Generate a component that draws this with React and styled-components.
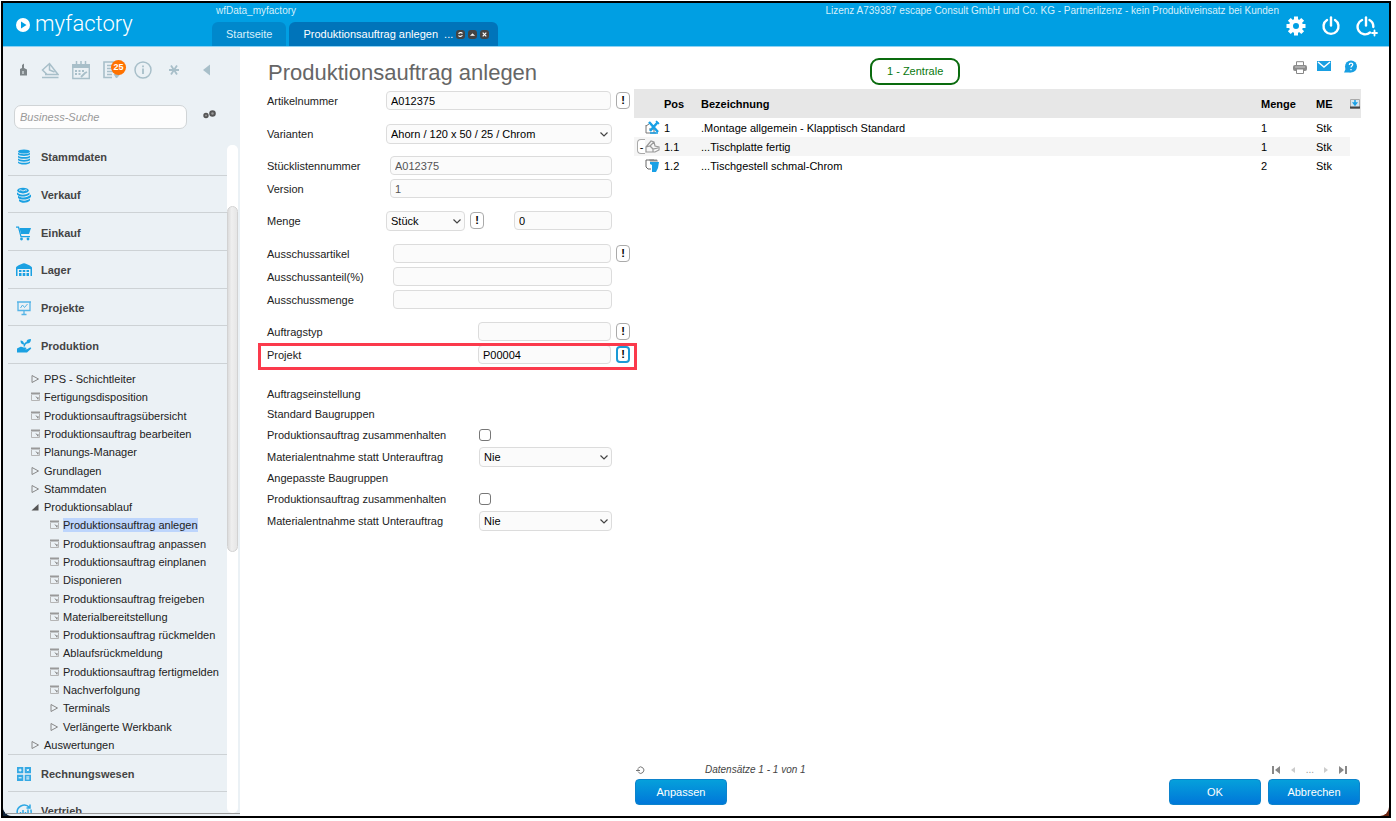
/**
 *
 * <App />
 *
 * ERP screen: header with tabs, module navigation,
 * order form and bill of materials
 *
 */
import React from 'react';
import styled, { createGlobalStyle, css } from 'styled-components';

const GlobalStyle = createGlobalStyle`
	* {
		box-sizing: border-box;
	}
	body {
		margin: 0;
		background: #fff;
		color: #222;
		font: 11px/14px 'Liberation Sans', Arial, sans-serif;
	}
	input, select, button {
		font: inherit;
		color: inherit;
	}
	a {
		color: inherit;
		text-decoration: none;
	}
	button {
		padding: 0;
		border: 0;
		background: none;
	}
	svg {
		display: block;
	}
`;

const Page = styled.div`
	height: 100vh;
	padding: 1px 5px 3px 1px;
`;

const Frame = styled.div`
	height: 100%;
	display: flex;
	flex-direction: column;
	border: 2px solid #000;
	background: linear-gradient(90deg, #0d2238 50%, #6b2410 50%);
`;

/* header */

const Header = styled.header`
	flex: none;
	height: 44px;
	display: flex;
	background: #009fe3;
	border-bottom: 1px solid #8ed2f3;
	color: #d4effb;
`;

const Logo = styled.a`
	width: 209px;
	display: flex;
	align-items: center;
	gap: 5px;
	padding: 0 0 2px 13px;
	color: #fff;
	font: 300 22px/28px Roboto, 'Liberation Sans', sans-serif;
`;

const LogoMark = styled.svg`
	margin-top: 3px;
`;

const HeaderMain = styled.div`
	flex: 1;
	display: flex;
	flex-direction: column;
	justify-content: space-between;
`;

const HeaderInfo = styled.div`
	display: flex;
	justify-content: space-between;
	padding: 1px 0 0 4px;
	font-size: 10px;
`;

const Tabs = styled.nav`
	display: flex;
	gap: 3px;
`;

const Tab = styled.a`
	height: 24px;
	display: flex;
	align-items: center;
	gap: 3px;
	padding: 0 ${props => (props.$active ? 9 : 14)}px 0 14px;
	border-radius: 6px 6px 0 0;
	background: ${props => (props.$active ? '#0074ba' : '#0088cc')};
	color: ${props => (props.$active ? '#fff' : '#d9effa')};
	white-space: pre;
`;

const HeaderActions = styled.div`
	display: flex;
	align-items: center;
	gap: 15px;
	padding: 3px 11px 0 7px;
	color: #fff;
`;

/* sidebar */

const Body = styled.div`
	flex: 1;
	min-height: 0;
	display: flex;
	overflow: hidden;
	border-radius: 0 0 9px 9px;
	background: #fff;
`;

const Sidebar = styled.aside`
	flex: none;
	width: 237px;
	display: flex;
	flex-direction: column;
	padding-bottom: 2px;
	background: #ebf1f5;
`;

const Tools = styled.div`
	height: 46px;
	display: flex;
	align-items: center;
	gap: 13px;
	padding-left: 15px;
	color: #a8bfc9;
`;

const Tool = styled.button`
	position: relative;
	width: ${props => props.$width || 18}px;
	display: flex;
	justify-content: center;
`;

const Count = styled.span`
	position: absolute;
	top: -1px;
	left: 8px;
	width: 15px;
	height: 15px;
	border-radius: 50%;
	background: #ff7200;
	color: #fff;
	font-size: 9px;
	font-weight: bold;
	line-height: 15px;
	text-align: center;
`;

const Search = styled.div`
	height: 45px;
	display: flex;
	align-items: flex-start;
	gap: 16px;
	padding: 12px 0 0 11px;
`;

const SearchInput = styled.input`
	width: 173px;
	height: 24px;
	padding: 0 5px;
	border: 1px solid #d0d4d6;
	border-radius: 7px;
	background: #fdfdfd;
	font-style: italic;

	&::placeholder {
		color: #999;
		opacity: 1;
	}
`;

const NavArea = styled.div`
	flex: 1;
	min-height: 0;
	display: grid;
	grid-template-columns: 1fr 11px;
	padding-right: 2px;
	overflow: hidden;
	border-bottom: 1px solid #999;
`;

const Nav = styled.nav`
	min-height: 0;
	overflow: hidden;
	padding-left: 5px;
`;

const Track = styled.div`
	min-height: 0;
	margin-top: 7px;
	padding-top: 61px;
	border-radius: 5px;
	background: #fff;
`;

const Thumb = styled.div`
	height: 346px;
	border: 1px solid #d2d2d2;
	border-radius: 6px;
	background: linear-gradient(90deg, #dcdcdc, #efefef 40%, #e6e6e6);
`;

const Modules = styled.div`
	height: ${props => props.$height}px;
	display: grid;
	grid-auto-rows: 1fr;
`;

const Module = styled.a`
	display: flex;
	align-items: center;
	gap: 9px;
	padding: 2px 0 0 8px;
	border-bottom: 1px solid #cdd2d5;
	color: #444;
	font-weight: bold;
`;

const Tree = styled.div`
	height: 391px;
	display: grid;
	grid-auto-rows: 1fr;
	padding-top: 6px;
	border-bottom: 1px solid #cdd2d5;
`;

const TreeItem = styled.a`
	display: flex;
	align-items: center;
	gap: 3px;
	padding-left: ${props => (props.$nested ? 42 : 23)}px;
	white-space: nowrap;

	span {
		background: ${props => (props.$active ? '#bdd5fc' : 'none')};
	}
`;

/* content */

const Main = styled.main`
	flex: 1;
	min-width: 0;
	display: flex;
	flex-direction: column;
	padding: 0 28px 11px 27px;
`;

const TitleBar = styled.div`
	flex: none;
	height: 42px;
	display: flex;
	align-items: center;
	padding: 6px 2px 0 1px;
`;

const Title = styled.h1`
	flex: 0 1 602px;
	margin: 0;
	padding-top: 4px;
	color: #666;
	font-size: 22px;
	font-weight: normal;
	line-height: 26px;
`;

const Location = styled.span`
	height: 27px;
	padding: 0 15px;
	border: 2px solid #0a6b0e;
	border-radius: 9px;
	color: #0a780e;
	line-height: 23px;
`;

const PageActions = styled.div`
	display: flex;
	align-items: center;
	gap: 10px;
	margin: 0 0 8px auto;
`;

const Columns = styled.div`
	flex: 1;
	min-height: 0;
	display: grid;
	grid-template-columns: 363px 1fr;
	column-gap: 4px;
`;

const Form = styled.form``;

const Group = styled.div`
	margin-bottom: ${props => props.$space || 9}px;
`;

const rowHighlight = css`
	&::after {
		content: '';
		position: absolute;
		inset: 0 -7px -4px -9px;
		border: 3px solid #fb3a4c;
		pointer-events: none;
	}
`;

const Row = styled.div`
	position: relative;
	height: ${props => props.$height || 23}px;
	display: flex;
	align-items: center;
	padding-right: ${props => (props.$lookup ? 0 : 18)}px;
	${props => props.$highlight && rowHighlight}
`;

const Label = styled.label`
	flex: none;
	width: ${props => props.$width}px;
`;

const fieldStyle = css`
	flex: 1;
	min-width: 0;
	width: 100%;
	border: 1px solid #dcdcdc;
	border-radius: 4px;
	background: #fbfbfb;
	outline: 0;
`;

const TextInput = styled.input`
	${fieldStyle}
	height: 19px;
	padding: 0 4px;
	color: ${props => (props.readOnly ? '#555' : '#000')};
`;

const SelectBox = styled.div`
	position: relative;
	flex: ${props => (props.$width ? `0 0 ${props.$width}px` : 1)};

	svg {
		position: absolute;
		top: 7px;
		right: 3px;
		pointer-events: none;
	}
`;

const SelectInput = styled.select`
	${fieldStyle}
	display: block;
	height: 20px;
	padding: 0 16px 0 4px;
	appearance: none;
	color: #000;
`;

const LookupButton = styled.button`
	flex: none;
	width: 14px;
	height: 17px;
	margin-left: 5px;
	border: ${props => (props.$focus ? '2px solid #1b9ad6' : '1px solid #aaa')};
	border-radius: 4px;
	background: #fff;
	color: #000;
	font-weight: bold;
	line-height: 13px;
	text-align: center;
`;

const QuantityBox = styled.div`
	flex: 0 0 98px;
	display: flex;
	margin-left: auto;
`;

const Checkbox = styled.input`
	width: 12px;
	height: 12px;
	margin: 0;
	appearance: none;
	border: 1px solid #777;
	border-radius: 3px;
	background: #fff;
`;

const Settings = styled.div`
	padding-top: 9px;
`;

const Result = styled.section`
	display: flex;
	flex-direction: column;
`;

const Table = styled.table`
	width: 100%;
	table-layout: fixed;
	border-collapse: collapse;
	color: #000;

	th,
	td {
		padding: 0;
		text-align: left;
		white-space: nowrap;
	}
	th {
		height: 29px;
		background: #e7e7e7;
	}
	td {
		height: 19px;
	}
	tbody tr:nth-child(even) td:not(:last-child) {
		background: #f5f5f5;
	}
`;

const Col = styled.col`
	width: ${props => (props.$width ? `${props.$width}px` : 'auto')};
`;

const IconCell = styled.div`
	display: flex;
	align-items: center;
	justify-content: flex-end;
	padding-right: 4px;
`;

const Collapse = styled.button`
	width: 8px;
	height: 15px;
	border: 1px solid #aaa;
	border-right: 0;
	border-radius: 4px 0 0 4px;
	background: #fff;
	line-height: 12px;
`;

const Pager = styled.div`
	display: flex;
	align-items: center;
	margin-top: auto;
	padding: 0 13px 2px 2px;
	color: #444;
	font-size: 10px;
	font-style: italic;
`;

const PagerText = styled.span`
	flex: 1;
	padding-left: 59px;
`;

const PagerNav = styled.div`
	display: flex;
	align-items: center;
	gap: 8px;
	color: #999;
	font-style: normal;
`;

const Footer = styled.div`
	display: flex;
	gap: 7px;
	padding: 0 1px;
`;

const Button = styled.button`
	width: 92px;
	height: 26px;
	margin-right: ${props => (props.$push ? 'auto' : 0)};
	border: 1px solid #0c83cc;
	border-radius: 4px;
	background: linear-gradient(#05a0db, #0077d9);
	color: #fff;
`;

/* icons */

const MODULE_ICONS = {
	Stammdaten: (
		<g fill="#1ba1e2">
			<ellipse cx="8" cy="2.500" rx="6" ry="2" />
			<path d="M2 3.500c1 2.200 11 2.200 12 0v1.800c-1 2.200-11 2.200-12 0zM2 6.400c1 2.200 11 2.200 12 0v1.800c-1 2.200-11 2.200-12 0zM2 9.300c1 2.200 11 2.200 12 0v1.800c-1 2.200-11 2.200-12 0zM2 12.200c1 2.200 11 2.200 12 0v1.600c-1 2.400-11 2.400-12 0z" />
		</g>
	),
	Verkauf: (
		<g fill="#1ba1e2">
			<ellipse cx="7" cy="3.600" rx="5.800" ry="2.800" />
			<path d="M3 3.600c2-2 3 1 5 0s2-1 3 0" stroke="#ebf1f5" fill="none" />
			<path d="M1 5.200c2 2.800 8 3.600 12.500.2v2C9 10.600 3 9.800 1 7.400zM2 8.800c3 2.600 9 2.600 13-1.200v2.300C11 13.600 5 13 2 11zM3 12.200c3 2 8 2 11-.6v2c-3 3-9 2.800-11 .4z" />
		</g>
	),
	Einkauf: (
		<g fill="#1ba1e2">
			<path d="M0 1.500h3L5.500 11H14v1.300H4.500L2 2.800H0z" />
			<path d="M3.500 3H15l-2 6H5z" />
			<circle cx="5.500" cy="14" r="1.400" />
			<circle cx="12" cy="14" r="1.400" />
		</g>
	),
	Lager: (
		<g fill="#1ba1e2">
			<path d="M0 14V5.500C1 3.500 5 2 8 1.200c3 .8 7 2.300 8 4.300V14h-1.500V7h-13v7z" />
			<path d="M3 8h2.500v2H3zM6.700 8h2.600v2H6.700zM10.500 8H13v2h-2.500zM3 11h2.500v3H3zM6.700 11h2.600v3H6.700zM10.500 11H13v3h-2.500z" />
		</g>
	),
	Projekte: (
		<g fill="none" stroke="#55b4e6">
			<path d="M1 2h14M2 2v8.500h12V2M8 10.500V14M5.500 14.500h5" strokeWidth="1.300" />
			<path d="M4.500 8l2-3 2 2.500L11.500 4" />
		</g>
	),
	Produktion: (
		<g fill="#1ba1e2">
			<path d="M1 10.500l3-1.500c2-1 3 .6 5 .5 2 0 2 1.500 0 1.700h2l3-1.700c1.500-.5 1.500 1 .5 1.700L11 14.500H1z" />
			<path d="M7.500 8.500C7.500 6 8.500 4.500 10.500 4c0-2 1.500-3 4.500-3 0 3-1.500 4.500-4 4.500C9.500 6 9 7 9 8.500zM8.200 6.800C5.500 6.500 4.500 5 4.500 2.500 6.500 2.500 8.200 4 8.200 6.800z" />
		</g>
	),
	Rechnungswesen: (
		<g>
			<path d="M1 1h6.300v6.300H1zM8.700 1H15v6.300H8.700zM1 8.700h6.300V15H1zM8.700 8.700H15V15H8.700z" fill="#35a9e4" />
			<path d="M4.100 2.600v3M2.600 4.100h3M10.800 3.100l2 2M12.800 3.100l-2 2M2.600 11.800h3M10.300 11h3M10.300 12.900h3" stroke="#fff" />
		</g>
	),
	Vertrieb: (
		<g fill="none" stroke="#2fa8e4">
			<path d="M1.500 11A7 7 0 0 1 13.500 4.500M14.800 6.500A7 7 0 0 1 15 10M14 1.500v3.500h-3.500" strokeWidth="1.500" />
			<path d="M4.500 14V9M7 14V7M9.500 14V9M12 14V6.500" strokeWidth="1.500" />
		</g>
	),
};

const ModuleIcon = ({ name }) => (
	<svg width="16" height="16" viewBox="0 0 16 16">
		{MODULE_ICONS[name]}
	</svg>
);

const TREE_ICONS = {
	closed: <path d="M1 1.500v7l6.500-3.500z" fill="none" stroke="#888" />,
	open: <path d="M7.500 2v6.500H.5z" fill="#555" />,
	page: (
		<g fill="none" stroke="#b5b5b5">
			<path d="M.5 3v5.500h8V3" />
			<path d="M0 1.500h9" stroke="#999" strokeWidth="2" />
			<path d="M5 4.500l2 2.500M7 5v2.500" stroke="#888" />
		</g>
	),
};

const TreeIcon = ({ type }) => (
	<svg width="10" height="10" viewBox="0 0 10 10">
		{TREE_ICONS[type]}
	</svg>
);

const Chevron = () => (
	<svg width="10" height="7" viewBox="0 0 10 7">
		<path d="M1.500 1.500L5 5l3.500-3.500" fill="none" stroke="#444" strokeWidth="1.200" />
	</svg>
);

const TabIcon = ({ children }) => (
	<svg width="9" height="9" viewBox="0 0 9 9">
		<rect width="9" height="9" rx="3" fill="#444" />
		<g fill="none" stroke="#fff" strokeWidth="1.200">
			{children}
		</g>
	</svg>
);

const PowerIcon = ({ plus }) => (
	<svg width={plus ? 22 : 20} height="22" viewBox={plus ? '0 0 22 22' : '0 0 20 22'}>
		<g fill="none" stroke="#fff" strokeWidth="2.400" strokeLinecap="round">
			<path d={plus ? 'M6 5A7.500 7.500 0 1 0 14 17.500M13.500 5A7.500 7.500 0 0 1 17.300 12' : 'M6 5A7.500 7.500 0 1 0 14 5'} />
			<path d="M10 2.500v8" />
			{plus && <path d="M18.500 15.500v5M16 18h5" strokeWidth="1.800" />}
		</g>
	</svg>
);

const PagerIcon = ({ d, faded }) => (
	<svg width="9" height="8" viewBox="0 0 9 8">
		<path d={d} fill={faded ? '#ccc' : '#888'} />
	</svg>
);

const PART_ICONS = {
	assembly: (
		<g fill="none">
			<path d="M1 5v8h10M1 6l3-2M4 9h5v4" stroke="#777" />
			<path d="M4 2l9 10M13 2L5 11" stroke="#18a0e6" strokeWidth="2.500" />
			<path d="M11 1l3 3M5 13h8" stroke="#18a0e6" strokeWidth="1.500" />
		</g>
	),
	plate: (
		<g fill="none" stroke="#999" strokeWidth="1.200">
			<path d="M1 13V8l5-6 3 1 1 4 4 1v3l-4 2zM1 8l4-1 3 3 5-1M5 7l4-4M8 10v3" />
		</g>
	),
	frame: (
		<g>
			<path d="M6 11H3L1 9V2h8" fill="none" stroke="#666" />
			<path d="M4 1.500h8l1 2H5z" fill="#888" />
			<path d="M5 4h9l-1 6-2 4H7V7L5 6z" fill="#18a0e6" />
		</g>
	),
};

const PartIcon = ({ type }) => (
	<svg width="15" height="15" viewBox="0 0 15 15">
		{PART_ICONS[type]}
	</svg>
);

const modules = ['Stammdaten', 'Verkauf', 'Einkauf', 'Lager', 'Projekte', 'Produktion'];
const lowerModules = ['Rechnungswesen', 'Vertrieb'];

const tree = [
	{ text: 'PPS - Schichtleiter', type: 'closed' },
	{ text: 'Fertigungsdisposition', type: 'page' },
	{ text: 'Produktionsauftragsübersicht', type: 'page' },
	{ text: 'Produktionsauftrag bearbeiten', type: 'page' },
	{ text: 'Planungs-Manager', type: 'page' },
	{ text: 'Grundlagen', type: 'closed' },
	{ text: 'Stammdaten', type: 'closed' },
	{ text: 'Produktionsablauf', type: 'open' },
	{ text: 'Produktionsauftrag anlegen', type: 'page', nested: true, active: true },
	{ text: 'Produktionsauftrag anpassen', type: 'page', nested: true },
	{ text: 'Produktionsauftrag einplanen', type: 'page', nested: true },
	{ text: 'Disponieren', type: 'page', nested: true },
	{ text: 'Produktionsauftrag freigeben', type: 'page', nested: true },
	{ text: 'Materialbereitstellung', type: 'page', nested: true },
	{ text: 'Produktionsauftrag rückmelden', type: 'page', nested: true },
	{ text: 'Ablaufsrückmeldung', type: 'page', nested: true },
	{ text: 'Produktionsauftrag fertigmelden', type: 'page', nested: true },
	{ text: 'Nachverfolgung', type: 'page', nested: true },
	{ text: 'Terminals', type: 'closed', nested: true },
	{ text: 'Verlängerte Werkbank', type: 'closed', nested: true },
	{ text: 'Auswertungen', type: 'closed' },
];

const parts = [
	{ pos: '1', name: '.Montage allgemein - Klapptisch Standard', amount: 1, icon: 'assembly' },
	{ pos: '1.1', name: '...Tischplatte fertig', amount: 1, icon: 'plate', open: true },
	{ pos: '1.2', name: '...Tischgestell schmal-Chrom', amount: 2, icon: 'frame' },
];

const Lookup = ({ label, focus }) => (
	<LookupButton type="button" aria-label={label} $focus={focus}>
		!
	</LookupButton>
);

const Field = ({ id, label, value = '', labelWidth, lookup, focus, readOnly }) => (
	<Row $lookup={lookup} $highlight={focus}>
		<Label htmlFor={id} $width={labelWidth}>
			{label}
		</Label>
		<TextInput id={id} defaultValue={value} readOnly={readOnly} />
		{lookup && <Lookup label={`${label} suchen`} focus={focus} />}
	</Row>
);

const Select = ({ id, value, width }) => (
	<SelectBox $width={width}>
		<SelectInput id={id} defaultValue={value}>
			<option>{value}</option>
		</SelectInput>
		<Chevron />
	</SelectBox>
);

const AssemblySettings = ({ id, title }) => (
	<>
		<Row $height={20}>{title}</Row>
		<Row $height={22}>
			<Label htmlFor={`${id}-keep`} $width={212}>
				Produktionsauftrag zusammenhalten
			</Label>
			<Checkbox type="checkbox" id={`${id}-keep`} />
		</Row>
		<Row $height={22}>
			<Label htmlFor={`${id}-material`} $width={212}>
				Materialentnahme statt Unterauftrag
			</Label>
			<Select id={`${id}-material`} value="Nie" />
		</Row>
	</>
);

const AppHeader = () => (
	<Header>
		<Logo href="#">
			<LogoMark width="14" height="14" viewBox="0 0 14 14">
				<circle cx="7" cy="7" r="7" fill="#fff" />
				<path d="M5 3.500v7L10.500 7z" fill="#009fe3" />
			</LogoMark>
			myfactory
		</Logo>
		<HeaderMain>
			<HeaderInfo>
				<span>wfData_myfactory</span>
				<span>
					Lizenz A739387 escape Consult GmbH und Co. KG - Partnerlizenz - kein Produktiveinsatz bei Kunden
				</span>
			</HeaderInfo>
			<Tabs>
				<Tab href="#">Startseite</Tab>
				<Tab href="#" $active>
					{'Produktionsauftrag anlegen  ...'}
					<TabIcon>
						<path d="M6.500 3.500C5.500 2 3 2.300 2.800 4M2.500 5.500C3.500 7 6 6.700 6.200 5" />
					</TabIcon>
					<TabIcon>
						<path d="M2.500 5.500h4L4.500 3.700z" fill="#fff" strokeWidth="0.500" />
					</TabIcon>
					<TabIcon>
						<path d="M2.700 2.700l3.600 3.600M6.300 2.700L2.700 6.300" />
					</TabIcon>
				</Tab>
			</Tabs>
		</HeaderMain>
		<HeaderActions>
			<button aria-label="Einstellungen">
				<svg width="20" height="20" viewBox="0 0 20 20">
					<circle cx="10" cy="10" r="5" fill="none" stroke="#fff" strokeWidth="4" />
					<path
						d="M10 .5v4M10 15.500v4M.5 10h4M15.500 10h4M3.300 3.300l2.700 2.700M14 14l2.700 2.700M3.300 16.700L6 14M14 6l2.700-2.700"
						stroke="#fff"
						strokeWidth="4"
					/>
				</svg>
			</button>
			<button aria-label="Abmelden">
				<PowerIcon />
			</button>
			<button aria-label="Neu anmelden">
				<PowerIcon plus />
			</button>
		</HeaderActions>
	</Header>
);

const AppSidebar = () => (
	<Sidebar>
		<Tools>
			<Tool aria-label="Benutzer" $width={10}>
				<svg width="10" height="14" viewBox="0 0 10 14">
					<path d="M4 5V2l2-1.500V5l3 1.500v6H2V6z" fill="#7d8588" />
					<path d="M4 8h2v3H4z" fill="#b8c0c3" />
				</svg>
			</Tool>
			<Tool aria-label="Entwürfe">
				<svg width="18" height="18" viewBox="0 0 18 18" fill="none" stroke="currentColor" strokeWidth="1.500">
					<path d="M1 16.500h16.500M4 13.500h13L8.500 2.500 1.500 9l4.500 4.500M8.500 2.500V9l5 2" />
				</svg>
			</Tool>
			<Tool aria-label="Kalender">
				<svg width="18" height="19" viewBox="0 0 18 19" fill="none" stroke="currentColor">
					<path d="M.8 3v14.500h16.500V3" strokeWidth="1.400" />
					<path d="M0 5h18" strokeWidth="4" />
					<path d="M4.500 0v5M9 0v5M13.500 0v5" strokeWidth="1.500" />
					<path d="M3 10h9M3 13h7" strokeWidth="2" strokeDasharray="2 1.500" />
					<path d="M9 16l4-4 2-1" strokeWidth="1.800" />
				</svg>
			</Tool>
			<Tool aria-label="Aufgaben">
				<svg width="18" height="18" viewBox="0 0 18 18" fill="none" stroke="currentColor">
					<path d="M14 12V1H1v15.500h8" strokeWidth="1.600" />
					<path d="M4 4.500h7M4 7.500h7M4 10.500h6M4 13.500h5" strokeWidth="1.500" />
					<path d="M11 13l2.500 4L17 13z" fill="currentColor" />
				</svg>
				<Count>25</Count>
			</Tool>
			<Tool aria-label="Information">
				<svg width="18" height="18" viewBox="0 0 18 18" fill="none" stroke="currentColor">
					<circle cx="9" cy="9" r="8" strokeWidth="1.500" />
					<path d="M9 7.500V13M9 4.500v1.700" strokeWidth="1.800" />
				</svg>
			</Tool>
			<Tool aria-label="Favoriten">
				<svg width="12" height="12" viewBox="0 0 12 12">
					<path d="M1 6h10M3 1.500l6 9M9 1.500l-6 9" stroke="currentColor" strokeWidth="1.800" />
				</svg>
			</Tool>
			<Tool aria-label="Einklappen" $width={22}>
				<svg width="8" height="12" viewBox="0 0 8 12">
					<path d="M7 .5v11L0 6z" fill="currentColor" />
				</svg>
			</Tool>
		</Tools>
		<Search>
			<SearchInput type="text" aria-label="Business-Suche" placeholder="Business-Suche" />
			<button aria-label="Suche einstellen">
				<svg width="13" height="18" viewBox="0 0 13 18">
					<g fill="#999" stroke="#555">
						<circle cx="3" cy="10.500" r="1.800" strokeWidth="1.800" />
						<circle cx="9.500" cy="8.500" r="2.300" strokeWidth="2" />
					</g>
				</svg>
			</button>
		</Search>
		<NavArea>
			<Nav>
				<Modules $height={226}>
					{modules.map(name => (
						<Module href="#" key={name}>
							<ModuleIcon name={name} />
							{name}
						</Module>
					))}
				</Modules>
				<Tree>
					{tree.map(item => (
						<TreeItem href="#" key={item.text} $nested={item.nested} $active={item.active}>
							<TreeIcon type={item.type} />
							<span>{item.text}</span>
						</TreeItem>
					))}
				</Tree>
				<Modules $height={74}>
					{lowerModules.map(name => (
						<Module href="#" key={name}>
							<ModuleIcon name={name} />
							{name}
						</Module>
					))}
				</Modules>
			</Nav>
			<Track>
				<Thumb />
			</Track>
		</NavArea>
	</Sidebar>
);

const OrderForm = () => (
	<Form>
		<Group $space={10}>
			<Field id="article" label="Artikelnummer" value="A012375" labelWidth={119} lookup />
		</Group>
		<Group>
			<Row>
				<Label htmlFor="variant" $width={119}>
					Varianten
				</Label>
				<Select id="variant" value="Ahorn / 120 x 50 / 25 / Chrom" />
			</Row>
		</Group>
		<Group>
			<Field id="bom" label="Stücklistennummer" value="A012375" labelWidth={123} readOnly />
			<Field id="version" label="Version" value="1" labelWidth={123} readOnly />
		</Group>
		<Group $space={10}>
			<Row>
				<Label htmlFor="unit" $width={119}>
					Menge
				</Label>
				<Select id="unit" value="Stück" width={79} />
				<Lookup label="Einheit suchen" />
				<QuantityBox>
					<TextInput aria-label="Menge" defaultValue="0" />
				</QuantityBox>
			</Row>
		</Group>
		<Group>
			<Field id="scrap-article" label="Ausschussartikel" labelWidth={126} lookup />
			<Field id="scrap-rate" label="Ausschussanteil(%)" labelWidth={126} />
			<Field id="scrap-amount" label="Ausschussmenge" labelWidth={126} />
		</Group>
		<Group>
			<Field id="order-type" label="Auftragstyp" labelWidth={211} lookup />
			<Field id="project" label="Projekt" value="P00004" labelWidth={211} lookup focus />
		</Group>
		<Settings>
			<Row $height={20}>Auftragseinstellung</Row>
			<AssemblySettings id="standard" title="Standard Baugruppen" />
			<AssemblySettings id="adapted" title="Angepasste Baugruppen" />
		</Settings>
	</Form>
);

const PartsTable = () => (
	<Table>
		<colgroup>
			<Col $width={30} />
			<Col $width={37} />
			<Col />
			<Col $width={55} />
			<Col $width={34} />
			<Col $width={11} />
		</colgroup>
		<thead>
			<tr>
				<th />
				<th>Pos</th>
				<th>Bezeichnung</th>
				<th>Menge</th>
				<th>ME</th>
				<th>
					<svg width="10" height="10" viewBox="0 0 10 10">
						<path d="M.5 .5v9h9v-9z" fill="#d5e5ee" stroke="#aaa" />
						<path d="M0 8.500h10" stroke="#444" strokeWidth="2" />
						<path d="M5 1v3M3.500 4L5 6l1.500-2z" stroke="#18a0e6" strokeWidth="1.500" fill="#18a0e6" />
					</svg>
				</th>
			</tr>
		</thead>
		<tbody>
			{parts.map(part => (
				<tr key={part.pos}>
					<td>
						<IconCell>
							{part.open && <Collapse aria-label="Zuklappen">-</Collapse>}
							<PartIcon type={part.icon} />
						</IconCell>
					</td>
					<td>{part.pos}</td>
					<td>{part.name}</td>
					<td>{part.amount}</td>
					<td>Stk</td>
					<td />
				</tr>
			))}
		</tbody>
	</Table>
);

const App = () => (
	<Page>
		<GlobalStyle />
		<Frame>
			<AppHeader />
			<Body>
				<AppSidebar />
				<Main>
					<TitleBar>
						<Title>Produktionsauftrag anlegen</Title>
						<Location>1 - Zentrale</Location>
						<PageActions>
							<button aria-label="Drucken">
								<svg width="14" height="13" viewBox="0 0 14 13">
									<path d="M3.500 5V.7h7V5" fill="#fff" stroke="#888" />
									<rect y="4" width="14" height="6" rx="2" fill="#8c8c8c" />
									<path d="M3.500 8h7v4.500h-7z" fill="#fff" stroke="#888" />
									<path d="M2 6h10" stroke="#ccc" />
								</svg>
							</button>
							<button aria-label="E-Mail">
								<svg width="14" height="14" viewBox="0 0 14 14">
									<rect x="0" y="1" width="14" height="10" fill="#189fe2" />
									<path d="M1 2l6 5 6-5" fill="none" stroke="#fff" strokeWidth="1.500" />
								</svg>
							</button>
							<button aria-label="Hilfe">
								<svg width="18" height="14" viewBox="0 0 18 14">
									<circle cx="10" cy="6.500" r="6" fill="#189fe2" />
									<path d="M3 12.500h7L5 8z" fill="#189fe2" />
									<path d="M8.300 5c0-2.500 3.500-2.300 3.400-.2C11.600 6 10 6 10 7.500M10 9v1.300" fill="none" stroke="#fff" strokeWidth="1.300" />
								</svg>
							</button>
						</PageActions>
					</TitleBar>
					<Columns>
						<OrderForm />
						<Result>
							<PartsTable />
							<Pager>
								<button aria-label="Aktualisieren">
									<svg width="10" height="10" viewBox="0 0 10 10">
										<path d="M2.500 7.500a3.200 3.200 0 1 0-.2-4.500M0 5.500h4M2 3.500v3" fill="none" stroke="#777" />
									</svg>
								</button>
								<PagerText>Datensätze 1 - 1 von 1</PagerText>
								<PagerNav>
									<PagerIcon d="M0 0h2v8H0zM8 0v8L3 4z" />
									<PagerIcon d="M6 1v6L2 4z" faded />
									...
									<PagerIcon d="M2 1v6l4-3z" faded />
									<PagerIcon d="M6 0h2v8H6zM0 0v8l5-4z" />
								</PagerNav>
							</Pager>
							<Footer>
								<Button $push>Anpassen</Button>
								<Button>OK</Button>
								<Button>Abbrechen</Button>
							</Footer>
						</Result>
					</Columns>
				</Main>
			</Body>
		</Frame>
	</Page>
);

export default App;
